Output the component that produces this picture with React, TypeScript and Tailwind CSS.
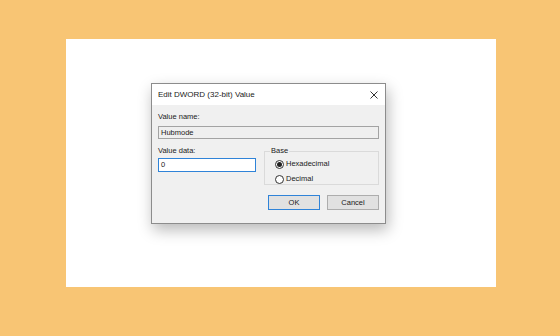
export default function App() {
  return (
    <div className="h-[336px] w-[560px] bg-[#f8c574] pl-[66px] pt-[39px] font-['Liberation_Sans',Arial,sans-serif] text-[#1a1a1a]">
      <div className="h-[248px] w-[430px] bg-white pl-[85px] pt-[44px]">
        <div className="flex h-[141px] w-[235px] flex-col border border-[#8c8c8c] bg-[#f0f0f0] shadow-[2px_6px_14px_rgba(0,0,0,0.28)]">
          {/* title bar */}
          <div className="flex h-[21px] items-center justify-between bg-white pl-[6px] pr-[6px]">
            <span className="text-[8px] leading-none">Edit DWORD (32-bit) Value</span>
            <svg width="8" height="8" viewBox="0 0 8 8" className="mr-[1px]">
              <path d="M0.5 0.5 L7.5 7.5 M7.5 0.5 L0.5 7.5" stroke="#333" strokeWidth="1" />
            </svg>
          </div>

          <div className="flex flex-col px-[6px] text-[7.5px] leading-[10px]">
            <div className="mt-[7px]">Value name:</div>
            <div className="mt-[4px] flex h-[13px] items-center border border-[#a3a3a3] bg-[#efefef] pl-[2px]">
              Hubmode
            </div>

            <div className="mt-[7px] flex gap-[8px]">
              <div className="flex w-[98px] flex-col">
                <div>Value data:</div>
                <div className="mt-[2px] flex h-[14px] items-center border border-[#2f83d8] bg-white pl-[2px]">
                  0
                </div>
              </div>

              <fieldset className="h-[39px] flex-1 border border-[#dadada] px-[5px]">
                <legend className="px-[1px] leading-[10px]">Base</legend>
                <div className="mt-[3px] flex items-center gap-[2px] pl-[5px]">
                  <span className="flex h-[9px] w-[9px] items-center justify-center rounded-full border border-[#333] bg-white">
                    <span className="h-[5px] w-[5px] rounded-full bg-[#222]" />
                  </span>
                  <span>Hexadecimal</span>
                </div>
                <div className="mt-[5px] flex items-center gap-[2px] pl-[5px]">
                  <span className="h-[9px] w-[9px] rounded-full border border-[#333] bg-white" />
                  <span>Decimal</span>
                </div>
              </fieldset>
            </div>

            <div className="mt-[10px] flex justify-end gap-[7px]">
              <button className="flex h-[15px] w-[52px] items-center justify-center border border-[#2f83d8] bg-[#e1e1e1]">
                OK
              </button>
              <button className="flex h-[15px] w-[52px] items-center justify-center border border-[#adadad] bg-[#e1e1e1]">
                Cancel
              </button>
            </div>
          </div>
        </div>
      </div>
    </div>
  );
}
